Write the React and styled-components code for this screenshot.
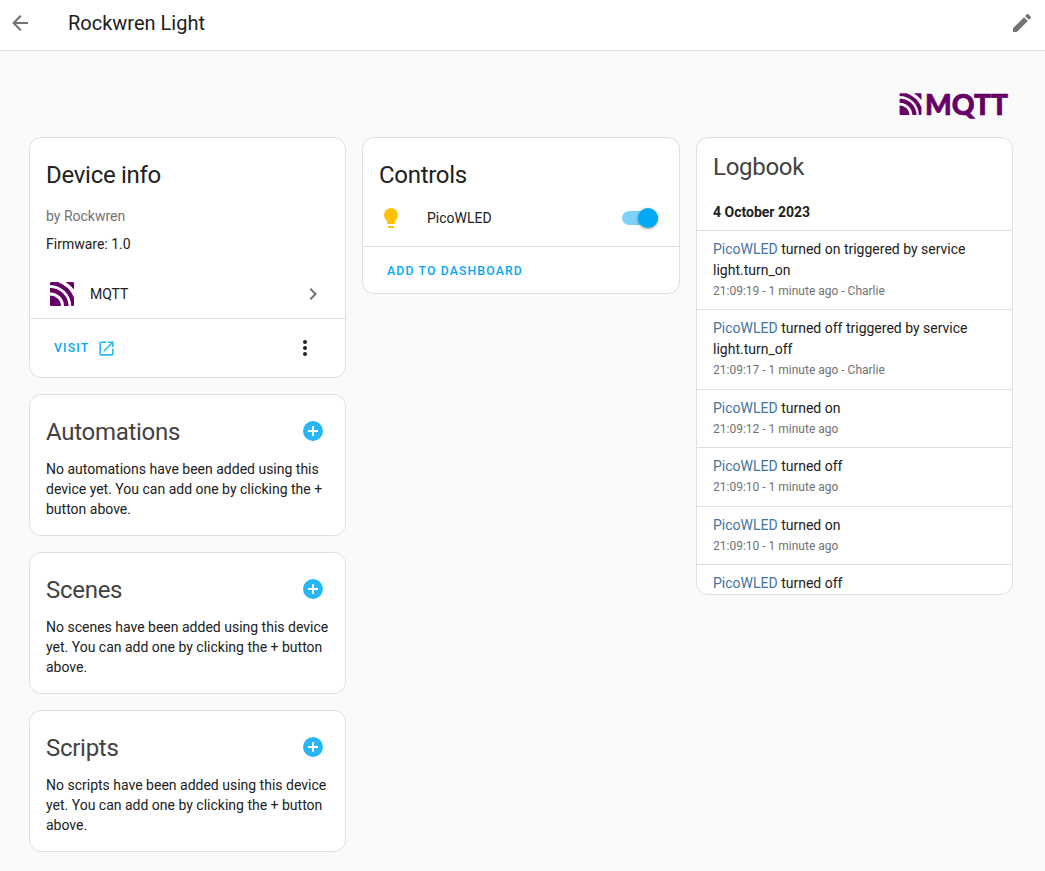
import React from "react";
import styled, { createGlobalStyle } from "styled-components";

const Global = createGlobalStyle`
  *, *::before, *::after { box-sizing: border-box; }
  body {
    margin: 0;
    height: 871px;
    overflow: hidden;
    background: #fafafa;
    color: #212121;
    font-family: Roboto, sans-serif;
    font-size: 14px;
    line-height: 20px;
  }
  h1, h2, h3, p { margin: 0; }
`;

const Toolbar = styled.header`
  display: flex;
  align-items: center;
  height: 51px;
  padding: 0 11px 4px 8px;
  background: #fff;
  border-bottom: 1px solid #e0e0e0;
`;
const PageTitle = styled.h1`
  flex: 1;
  margin-left: 36px;
  font-size: 20px;
  font-weight: 400;
  line-height: 24px;
`;
const Icon = styled.svg`
  display: block;
  flex: none;
  width: ${(p) => p.$size || 24}px;
  height: ${(p) => p.$size || 24}px;
  fill: ${(p) => p.$color || "#727272"};
`;
const Content = styled.main`
  width: 984px;
  margin: 38px 0 0 29px;
`;
const BrandRow = styled.div`
  display: flex;
  justify-content: flex-end;
  height: 48px;
  padding-right: 3px;
`;
const Wordmark = styled.svg`
  display: block;
  width: 112px;
  height: 32px;
`;
const Columns = styled.div`
  display: grid;
  grid-template-columns: 317px 318px 317px;
  gap: 16px;
  align-items: start;
`;
const Column = styled.div`
  display: flex;
  flex-direction: column;
  gap: 16px;
`;
const Card = styled.section`
  height: ${(p) => p.$height}px;
  background: #fff;
  border: 1px solid #e0e0e0;
  border-radius: 12px;
  overflow: hidden;
`;
const CardTitle = styled.h2`
  padding: ${(p) => p.$top}px 16px ${(p) => p.$bottom}px;
  color: ${(p) => (p.$soft ? "#424242" : "#212121")};
  font-size: 24px;
  font-weight: 400;
  line-height: 32px;
  letter-spacing: -0.012em;
`;
const Detail = styled.p`
  padding: 0 16px;
  margin-bottom: 8px;
  color: ${(p) => (p.$muted ? "#727272" : "#212121")};
`;
const IntegrationRow = styled.div`
  display: flex;
  align-items: center;
  height: 48px;
  margin-top: 16px;
  padding: 0 20px;
`;
const IntegrationName = styled.span`
  flex: 1;
  margin-left: 16px;
`;
const Actions = styled.div`
  display: flex;
  align-items: center;
  justify-content: space-between;
  height: ${(p) => p.$height}px;
  padding: 0 28px 0 24px;
  border-top: 1px solid #e0e0e0;
`;
const TextButton = styled.button`
  display: flex;
  align-items: center;
  gap: 8px;
  padding: 0;
  border: 0;
  background: none;
  color: #03a9f4;
  font: 500 12.25px/20px Roboto, sans-serif;
  letter-spacing: 1.14px;
`;
const EntityRow = styled.div`
  display: flex;
  align-items: center;
  height: 40px;
  margin-bottom: 8px;
  padding: 0 21px 0 16px;
`;
const EntityName = styled.span`
  flex: 1;
  margin-left: 24px;
`;
const Track = styled.span`
  display: flex;
  align-items: center;
  justify-content: flex-end;
  width: 36px;
  height: 14px;
  border-radius: 7px;
  background: #7cd2f9;
`;
const Thumb = styled.span`
  flex: none;
  width: 20px;
  height: 20px;
  border-radius: 50%;
  background: #03a9f4;
  box-shadow: 0 1px 3px rgba(0, 0, 0, 0.4);
`;
const HelperHeader = styled.div`
  display: flex;
  align-items: center;
  justify-content: space-between;
  height: 64px;
  padding: 8px 20px 0 0;
`;
const HelperText = styled.p`
  padding: 0 16px;
`;
const DateHeading = styled.h3`
  height: 30px;
  padding: 2px 16px 0;
  font-size: 14px;
  font-weight: 700;
`;
const LogEntry = styled.div`
  height: ${(p) => p.$height}px;
  padding: 8px 16px 0;
  border-top: 1px solid #e0e0e0;
  line-height: 21px;
`;
const EntityLink = styled.a`
  color: #44739e;
`;
const LogTime = styled.div`
  color: #727272;
  font-size: 12px;
`;

const paths = {
  back: "M20,11V13H8L13.5,18.5L12.08,19.92L4.16,12L12.08,4.08L13.5,5.5L8,11H20Z",
  pencil:
    "M20.71,7.04C21.1,6.65 21.1,6 20.71,5.63L18.37,3.29C18,2.9 17.35,2.9 16.96,3.29L15.12,5.12L18.87,8.87M3,17.25V21H6.75L17.81,9.93L14.06,6.18L3,17.25Z",
  chevron: "M8.59,16.58L13.17,12L8.59,7.41L10,6L16,12L10,18L8.59,16.58Z",
  open: "M14,3V5H17.59L7.76,14.83L9.17,16.24L19,6.41V10H21V3M19,19H5V5H12V3H5C3.89,3 3,3.9 3,5V19A2,2 0 0,0 5,21H19A2,2 0 0,0 21,19V12H19V19Z",
  dots: "M12,16A2,2 0 0,1 14,18A2,2 0 0,1 12,20A2,2 0 0,1 10,18A2,2 0 0,1 12,16M12,10A2,2 0 0,1 14,12A2,2 0 0,1 12,14A2,2 0 0,1 10,12A2,2 0 0,1 12,10M12,4A2,2 0 0,1 14,6A2,2 0 0,1 12,8A2,2 0 0,1 10,6A2,2 0 0,1 12,4Z",
  bulb: "M12,2A7,7 0 0,0 5,9C5,11.38 6.19,13.47 8,14.74V17A1,1 0 0,0 9,18H15A1,1 0 0,0 16,17V14.74C17.81,13.47 19,11.38 19,9A7,7 0 0,0 12,2M9,21A1,1 0 0,0 10,22H14A1,1 0 0,0 15,21V20H9V21Z",
  plus: "M17,13H13V17H11V13H7V11H11V7H13V11H17M12,2A10,10 0 0,0 2,12A10,10 0 0,0 12,22A10,10 0 0,0 22,12A10,10 0 0,0 12,2Z",
};

const MdiIcon = ({ name, color, size }) => (
  <Icon viewBox="0 0 24 24" $color={color} $size={size}>
    <path d={paths[name]} />
  </Icon>
);

const Waves = () => (
  <g fill="#660066">
    <path d="M0 13.5A10.8 10.8 0 0 1 11 24H1.2A1.2 1.2 0 0 1 0 22.8Z" />
    <path d="M0 6A18.3 18.3 0 0 1 18.6 24H14A13.8 13.8 0 0 0 0 10.5Z" />
    <path d="M0 1.2A1.2 1.2 0 0 1 1.2 0H7.6A27 27 0 0 1 24 15.5V22.8A1.2 1.2 0 0 1 22.8 24H21.2A21.2 21.2 0 0 0 0 3.1Z" />
    <path d="M15.6 0H22.8A1.2 1.2 0 0 1 24 1.2V7.6A29 29 0 0 0 15.6 0Z" />
  </g>
);

const helpers = [
  ["Automations", "No automations have been added using this device yet. You can add one by clicking the + button above."],
  ["Scenes", "No scenes have been added using this device yet. You can add one by clicking the + button above."],
  ["Scripts", "No scripts have been added using this device yet. You can add one by clicking the + button above."],
];

const log = [
  ["turned on triggered by service light.turn_on", "21:09:19 - 1 minute ago - Charlie", 79],
  ["turned off triggered by service light.turn_off", "21:09:17 - 1 minute ago - Charlie", 80],
  ["turned on", "21:09:12 - 1 minute ago", 58],
  ["turned off", "21:09:10 - 1 minute ago", 59],
  ["turned on", "21:09:10 - 1 minute ago", 58],
  ["turned off", null, 30],
];

export default function App() {
  return (
    <>
      <Global />
      <Toolbar>
        <MdiIcon name="back" />
        <PageTitle>Rockwren Light</PageTitle>
        <MdiIcon name="pencil" />
      </Toolbar>
      <Content>
        <BrandRow>
          <Wordmark viewBox="0 0 112 32">
            <g transform="translate(1.6 4.2) scale(.91)">
              <Waves />
            </g>
            <text
              x="27"
              y="25.6"
              fill="#660066"
              stroke="#660066"
              strokeWidth="0.7"
              fontFamily="Lato, sans-serif"
              fontWeight="900"
              fontSize="29"
              textLength="83"
              lengthAdjust="spacingAndGlyphs"
            >
              MQTT
            </text>
          </Wordmark>
        </BrandRow>
        <Columns>
          <Column>
            <Card $height={241}>
              <CardTitle $top={21} $bottom={15}>Device info</CardTitle>
              <Detail $muted>by Rockwren</Detail>
              <Detail>Firmware: 1.0</Detail>
              <IntegrationRow>
                <Icon viewBox="0 0 24 24">
                  <Waves />
                </Icon>
                <IntegrationName>MQTT</IntegrationName>
                <MdiIcon name="chevron" />
              </IntegrationRow>
              <Actions $height={59}>
                <TextButton>
                  VISIT
                  <MdiIcon name="open" color="#29b6f6" size={19} />
                </TextButton>
                <MdiIcon name="dots" color="#212121" />
              </Actions>
            </Card>
            {helpers.map(([title, text]) => (
              <Card key={title} $height={142}>
                <HelperHeader>
                  <CardTitle $soft $top={2} $bottom={0}>{title}</CardTitle>
                  <MdiIcon name="plus" color="#29b6f6" />
                </HelperHeader>
                <HelperText>{text}</HelperText>
              </Card>
            ))}
          </Column>
          <Card $height={157}>
            <CardTitle $top={21} $bottom={7}>Controls</CardTitle>
            <EntityRow>
              <MdiIcon name="bulb" color="#ffc107" />
              <EntityName>PicoWLED</EntityName>
              <Track>
                <Thumb />
              </Track>
            </EntityRow>
            <Actions $height={48}>
              <TextButton>ADD TO DASHBOARD</TextButton>
            </Actions>
          </Card>
          <Card $height={458}>
            <CardTitle $soft $top={13} $bottom={17}>Logbook</CardTitle>
            <DateHeading>4 October 2023</DateHeading>
            {log.map(([text, time, height], i) => (
              <LogEntry key={i} $height={height}>
                <EntityLink>PicoWLED</EntityLink> {text}
                {time && <LogTime>{time}</LogTime>}
              </LogEntry>
            ))}
          </Card>
        </Columns>
      </Content>
    </>
  );
}
